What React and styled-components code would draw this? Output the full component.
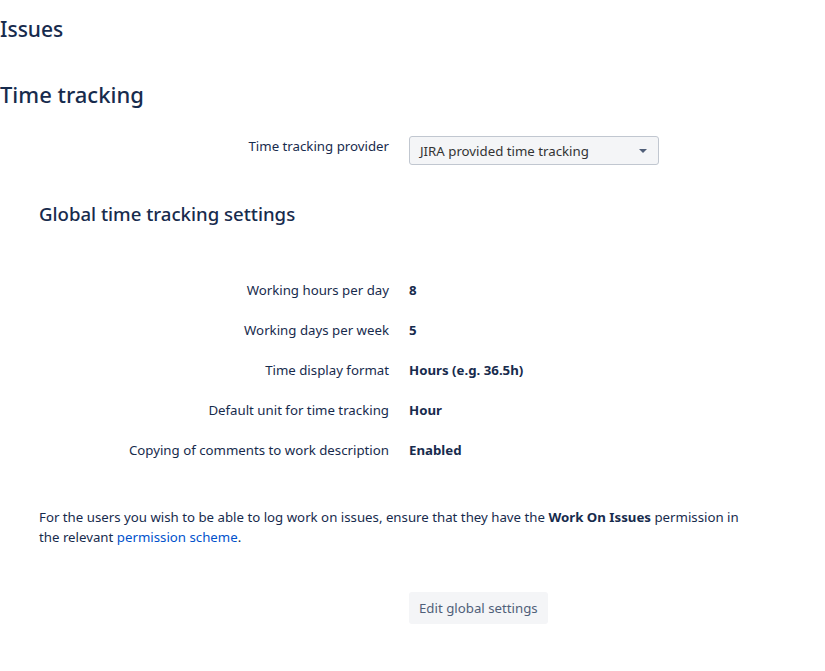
import React from 'react';
import styled, { createGlobalStyle } from 'styled-components';

const GlobalStyle = createGlobalStyle`
  body {
    margin: 0;
    background: #fff;
    color: #172b4d;
    font-family: "Noto Sans", "Liberation Sans", sans-serif;
    font-size: 13.25px;
  }
`;

const Page = styled.div`
  padding-top: 14px;
`;

const PageTitle = styled.h1`
  margin: 0;
  font-size: 21px;
  font-weight: 500;
  line-height: 30px;
`;

const SectionTitle = styled.h2`
  margin: 35px 0 0;
  font-size: 22px;
  font-weight: 500;
  line-height: 30px;
`;

const Form = styled.div`
  display: flex;
  flex-direction: column;
`;

const Row = styled.div`
  display: grid;
  grid-template-columns: 389px 1fr;
  column-gap: 20px;
  align-items: ${p => (p.$top ? 'start' : 'center')};
  height: 40px;
`;

const Label = styled.div`
  text-align: right;
  line-height: 20px;
  padding-top: ${p => (p.$top ? '0' : '0')};
`;

const Value = styled.div`
  font-weight: 700;
  line-height: 20px;
`;

const Select = styled.div`
  width: 250px;
  height: 29px;
  box-sizing: border-box;
  border: 1px solid #c1c7d0;
  border-radius: 3px;
  background: #f4f5f7;
  display: flex;
  align-items: center;
  justify-content: space-between;
  padding: 0 11px 0 10px;
  color: #333;
`;

const Caret = styled.span`
  width: 0;
  height: 0;
  border-left: 4px solid transparent;
  border-right: 4px solid transparent;
  border-top: 4px solid #505f79;
`;

const Inner = styled.div`
  padding-left: 39px;
`;

const SubTitle = styled.h3`
  margin: 0;
  font-size: 18.6px;
  font-weight: 500;
  line-height: 24px;
`;

const Note = styled.p`
  margin: 0;
  padding-left: 39px;
  width: 720px;
  line-height: 20px;
`;

const LinkText = styled.a`
  color: #0052cc;
  text-decoration: none;
`;

const Button = styled.button`
  font-family: inherit;
  font-size: 13.25px;
  color: #505f79;
  background: #f4f5f7;
  border: none;
  border-radius: 3px;
  height: 32px;
  padding: 0 10px;
`;

const ButtonRow = styled.div`
  padding-left: 409px;
`;

const settings = [
  ['Working hours per day', '8'],
  ['Working days per week', '5'],
  ['Time display format', 'Hours (e.g. 36.5h)'],
  ['Default unit for time tracking', 'Hour'],
  ['Copying of comments to work description', 'Enabled'],
];

export default function App() {
  return (
    <Page>
      <GlobalStyle />
      <PageTitle>Issues</PageTitle>
      <SectionTitle>Time tracking</SectionTitle>
      <Form style={{ marginTop: 27 }}>
        <Row $top>
          <Label $top>Time tracking provider</Label>
          <Select>
            <span>JIRA provided time tracking</span>
            <Caret />
          </Select>
        </Row>
      </Form>
      <Inner style={{ marginTop: 26 }}>
        <SubTitle>Global time tracking settings</SubTitle>
      </Inner>
      <Form style={{ marginTop: 44 }}>
        {settings.map(([label, value]) => (
          <Row key={label}>
            <Label>{label}</Label>
            <Value>{value}</Value>
          </Row>
        ))}
      </Form>
      <Note style={{ marginTop: 37 }}>
        For the users you wish to be able to log work on issues, ensure that they have the{' '}
        <b>Work On Issues</b> permission in the relevant{' '}
        <LinkText href="#">permission scheme</LinkText>.
      </Note>
      <ButtonRow style={{ marginTop: 45 }}>
        <Button>Edit global settings</Button>
      </ButtonRow>
    </Page>
  );
}
